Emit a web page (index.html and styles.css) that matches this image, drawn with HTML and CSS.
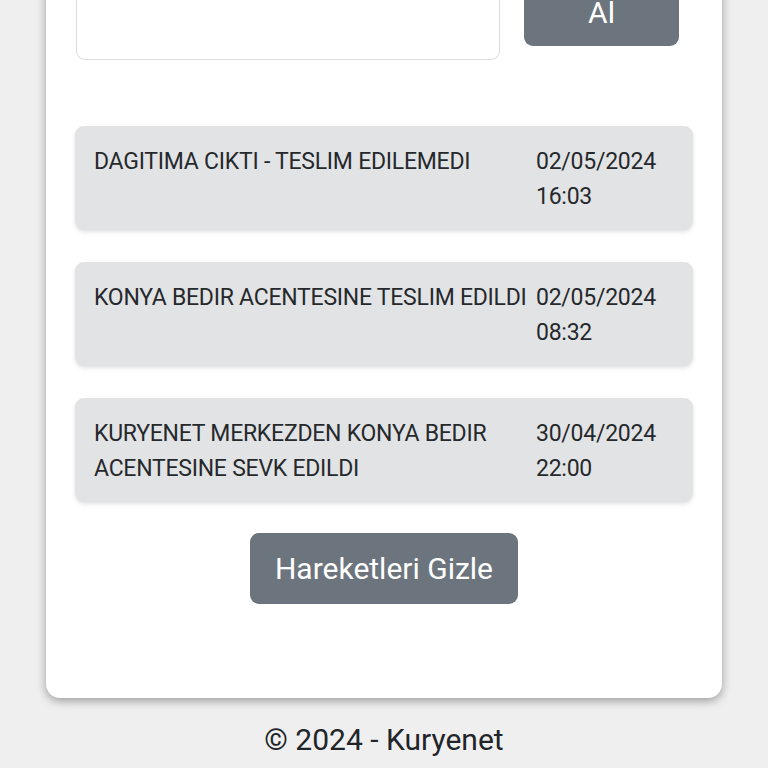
FILE: index.html
```html
<!DOCTYPE html>
<html lang="tr">
<head>
<meta charset="utf-8">
<title>Kuryenet - Kargo Takip</title>
<link rel="stylesheet" href="styles.css">
</head>
<body>
<main class="page">
  <section class="card">
    <form class="query">
      <div class="query-input">Takip numarası giriş<br>&nbsp;</div>
      <button type="button" class="btn btn-query">Al</button>
    </form>
    <ul class="moves">
      <li class="move">
        <span class="move-text">DAGITIMA CIKTI - TESLIM EDILEMEDI</span>
        <span class="move-date">02/05/2024<br>16:03</span>
      </li>
      <li class="move">
        <span class="move-text">KONYA BEDIR ACENTESINE TESLIM EDILDI</span>
        <span class="move-date">02/05/2024<br>08:32</span>
      </li>
      <li class="move">
        <span class="move-text">KURYENET MERKEZDEN KONYA BEDIR ACENTESINE SEVK EDILDI</span>
        <span class="move-date">30/04/2024<br>22:00</span>
      </li>
    </ul>
    <div class="actions">
      <button type="button" class="btn btn-hide">Hareketleri Gizle</button>
    </div>
  </section>
  <footer class="footer">© 2024 - Kuryenet</footer>
</main>
</body>
</html>
```
FILE: styles.css
```css
* { box-sizing: border-box; }
html, body { margin: 0; padding: 0; }
body {
  background: #efefef;
  font-family: Roboto, "Noto Sans", "Liberation Sans", sans-serif;
  color: #212529;
  overflow: hidden;
}
.page {
  margin-top: -70px;
  padding: 0 46px;
}
.card {
  background: #fff;
  border-radius: 14px;
  box-shadow: 0 3px 10px rgba(0, 0, 0, 0.35);
  padding: 30px 29px 94px 29px;
}
.query {
  display: grid;
  grid-template-columns: 424px 155px;
  column-gap: 24px;
  align-items: end;
  margin: 0 0 66px 1px;
}
.query-input {
  height: 100px;
  border: 1.5px solid #dcdcdc;
  border-radius: 9px;
  padding: 2px 17px;
  font-size: 23px;
  line-height: 34px;
  letter-spacing: -0.25px;
  color: #212529;
  overflow: hidden;
}
.btn {
  border: none;
  border-radius: 9px;
  background: #6c757d;
  color: #fff;
  font-family: Roboto, "Noto Sans", "Liberation Sans", sans-serif;
  font-size: 30px;
  line-height: 45px;
  cursor: pointer;
}
.btn-query {
  height: 68px;
  margin-bottom: 14px;
  padding: 11px 20px;
}
.moves {
  list-style: none;
  margin: 0;
  padding: 0;
  display: flex;
  flex-direction: column;
  gap: 32px;
}
.move {
  display: grid;
  grid-template-columns: 442px 1fr;
  background: #e2e3e5;
  border-radius: 9px;
  box-shadow: 0 2px 4px rgba(0, 0, 0, 0.12);
  padding: 19px 19px 16px 19px;
  font-size: 23px;
  line-height: 34.5px;
  letter-spacing: -0.25px;
  color: #26292c;
  min-height: 104px;
}
.actions {
  display: flex;
  justify-content: center;
  margin-top: 31px;
}
.btn-hide {
  height: 71px;
  padding: 13px 25px;
}
.footer {
  text-align: center;
  font-size: 30px;
  line-height: 45px;
  margin-top: 19px;
  color: #212529;
}
```
